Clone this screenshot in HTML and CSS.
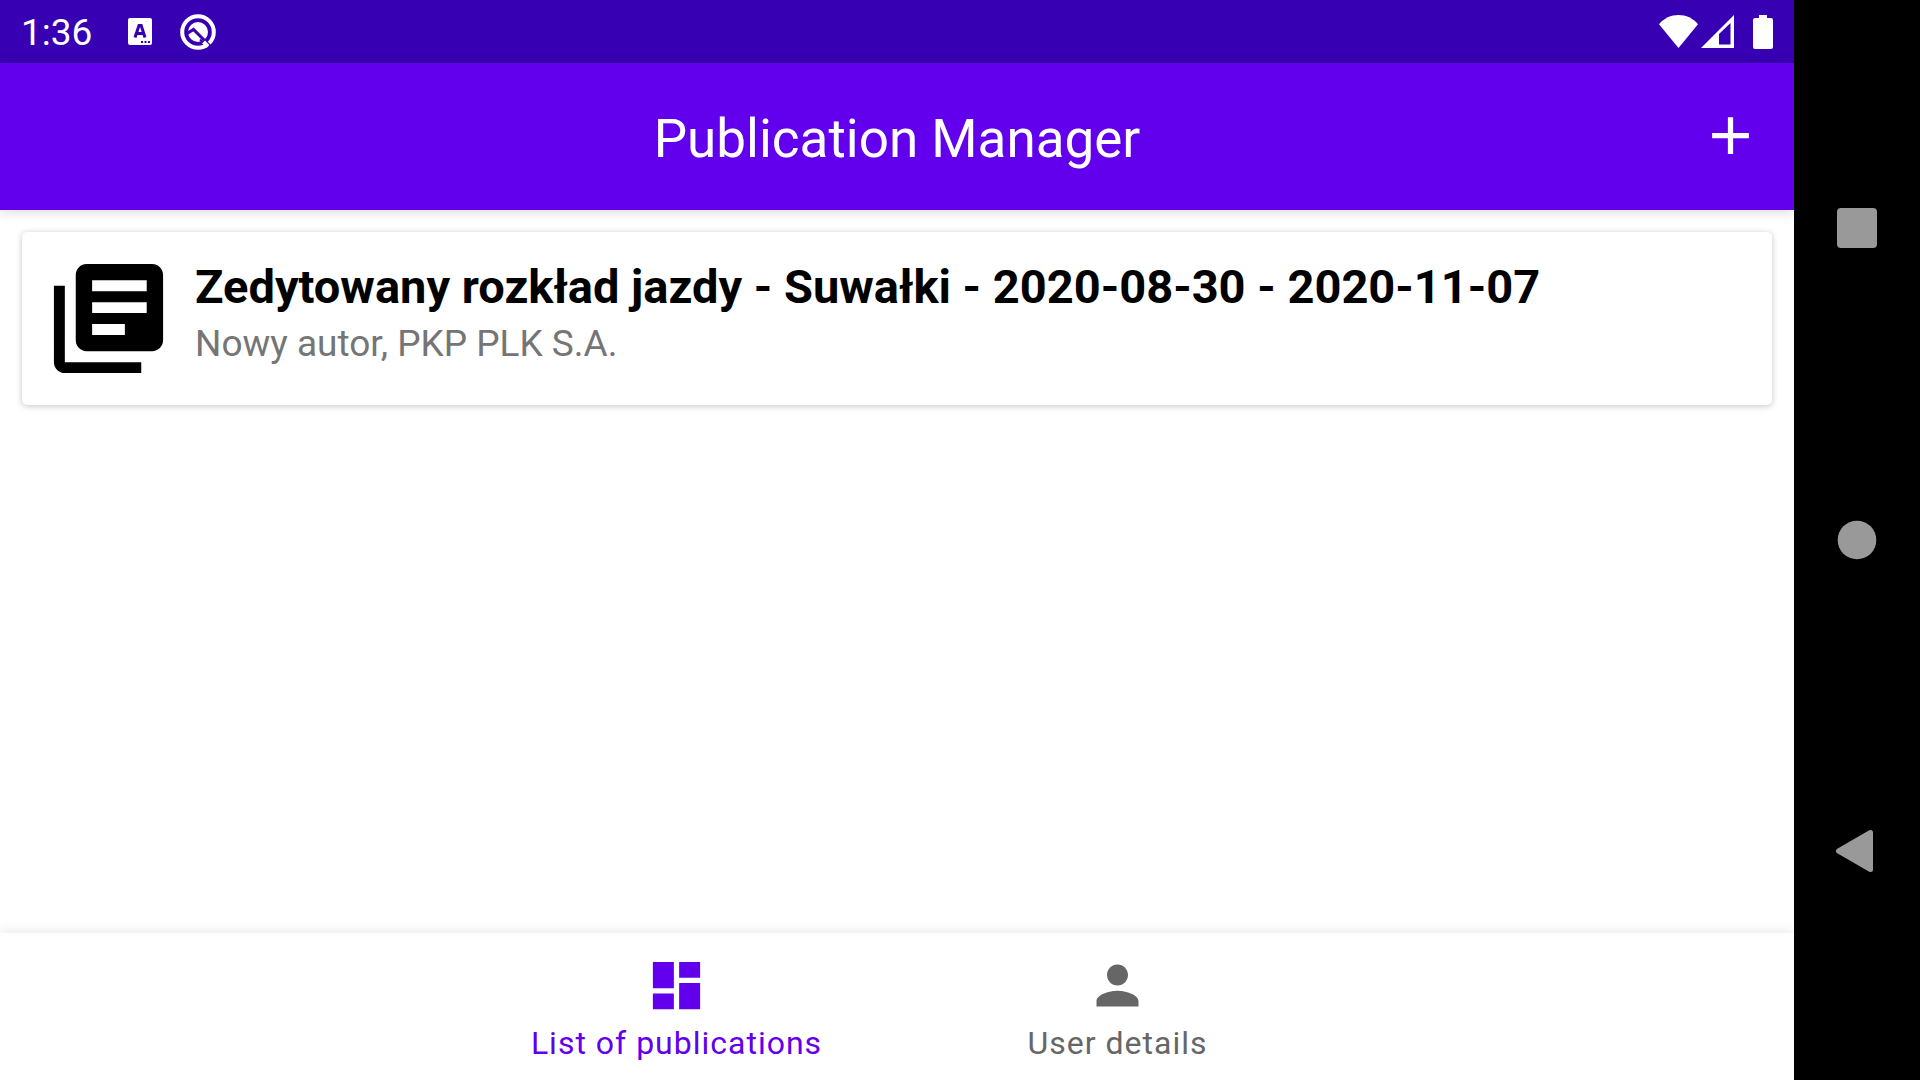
FILE: index.html
```html
<!DOCTYPE html>
<html lang="en">
<head>
<meta charset="utf-8">
<meta name="viewport" content="width=device-width, initial-scale=1">
<title>Publication Manager</title>
<link rel="stylesheet" href="styles.css">
</head>
<body>
<div class="device">
  <div class="app">
    <div class="status-bar">
      <div class="status-group notifications">
        <time class="clock">1:36</time>
        <svg width="24" height="27" viewBox="0 0 24 27" aria-hidden="true">
          <rect width="24" height="27" rx="2" fill="#fff"/>
          <path d="M7 19.500 11 7.500h2.200L17 19.500M8.500 15.500h7" fill="none" stroke="#3700b3" stroke-width="3"/>
          <path d="M13 23h2v2h-2zM16.500 23h2v2h-2zM20 23h2v2h-2z" fill="#3700b3"/>
        </svg>
        <svg width="36" height="36" viewBox="0 0 36 36" aria-hidden="true">
          <circle cx="18" cy="18" r="15.800" fill="none" stroke="#fff" stroke-width="4"/>
          <circle cx="18" cy="18" r="10" fill="#fff"/>
          <path d="M7 19.500 13.500 15.500 31 33" fill="none" stroke="#3700b3" stroke-width="3"/>
          <path d="M20 25.500 29.500 35" fill="none" stroke="#3700b3" stroke-width="2"/>
          <path d="M23.500 28 28 32.500" fill="none" stroke="#fff" stroke-width="4"/>
        </svg>
      </div>
      <div class="status-group">
        <svg width="39" height="33" viewBox="0 0 39 33" aria-hidden="true"><path d="M19.500 33 0 9.200C5 3.200 12 0 19.500 0S34 3.200 39 9.200z" fill="#fff"/></svg>
        <svg width="33" height="33" viewBox="0 0 33 33" aria-hidden="true"><path fill-rule="evenodd" d="M0 33 33 0v33zM18 29.500h11.500V8L18 19z" fill="#fff"/></svg>
        <svg class="battery" width="20" height="34" viewBox="0 0 20 34" aria-hidden="true"><path d="M6 0h8v3h4a2 2 0 0 1 2 2v27a2 2 0 0 1-2 2H2a2 2 0 0 1-2-2V5a2 2 0 0 1 2-2h4z" fill="#fff"/></svg>
      </div>
    </div>

    <header class="toolbar">
      <h1 class="toolbar-title">Publication Manager</h1>
      <button class="add-button" type="button" aria-label="Add publication">
        <svg class="icon" viewBox="0 0 24 24" aria-hidden="true"><path d="M19 13h-6v6h-2v-6H5v-2h6V5h2v6h6z"/></svg>
      </button>
    </header>

    <main class="content">
      <article class="card">
        <svg class="card-icon" viewBox="0 0 24 24" aria-hidden="true"><path d="M4 6H2v14c0 1.100.9 2 2 2h14v-2H4zM20 2H8c-1.100 0-2 .9-2 2v12c0 1.100.9 2 2 2h12c1.100 0 2-.9 2-2V4c0-1.100-.9-2-2-2zm-1 9H9V9h10zm-4 4H9v-2h6zm4-8H9V5h10z"/></svg>
        <div class="card-text">
          <h2 class="card-title">Zedytowany rozkład jazdy - Suwałki - 2020-08-30 - 2020-11-07</h2>
          <p class="card-author">Nowy autor, PKP PLK S.A.</p>
        </div>
      </article>
    </main>

    <nav class="bottom-nav">
      <a class="nav-item active" href="#publications" aria-current="page">
        <svg class="icon" viewBox="0 0 24 24" aria-hidden="true"><path d="M3 13h8V3H3zm0 8h8v-6H3zm10 0h8V11h-8zm0-18v6h8V3z"/></svg>
        <span>List of publications</span>
      </a>
      <a class="nav-item" href="#user">
        <svg class="icon" viewBox="0 0 24 24" aria-hidden="true"><path d="M12 12c2.210 0 4-1.790 4-4s-1.790-4-4-4-4 1.790-4 4 1.790 4 4 4zm0 2c-2.670 0-8 1.340-8 4v2h16v-2c0-2.660-5.330-4-8-4z"/></svg>
        <span>User details</span>
      </a>
    </nav>
  </div>

  <div class="system-nav">
    <button type="button" aria-label="Overview"><svg width="42" height="42" viewBox="0 0 42 42"><rect x="1" y="1" width="40" height="40" rx="4"/></svg></button>
    <button type="button" aria-label="Home"><svg width="42" height="42" viewBox="0 0 42 42"><circle cx="21" cy="21" r="19.300"/></svg></button>
    <button type="button" aria-label="Back"><svg width="42" height="42" viewBox="0 0 42 42"><path d="M2.500 20 34.500 1.500V38.500z" stroke="#999" stroke-width="5" stroke-linejoin="round"/></svg></button>
  </div>
</div>
</body>
</html>
```
FILE: styles.css
```css
* {
  box-sizing: border-box;
}

body {
  margin: 0;
  font-family: Roboto, "Noto Sans", sans-serif;
  background: #fff;
}

h1, h2, p {
  margin: 0;
}

svg {
  display: block;
  flex: none;
  overflow: visible;
}

button {
  padding: 0;
  border: 0;
  background: none;
  cursor: pointer;
}

.device {
  display: flex;
  min-height: 100vh;
}

.app {
  flex: 1;
  min-width: 0;
  display: flex;
  flex-direction: column;
}

.status-bar {
  display: flex;
  justify-content: space-between;
  align-items: center;
  height: 63px;
  padding: 0 21px;
  background: #3700b3;
  color: #fff;
}

.status-group {
  display: flex;
  align-items: center;
  gap: 3px;
}

.notifications {
  gap: 28px;
}

.clock {
  padding: 2px 8px 0 0;
  font-size: 37px;
  line-height: 43px;
}

.battery {
  margin-left: 16px;
}

.icon {
  width: 63px;
  height: 63px;
  fill: currentColor;
}

.toolbar {
  display: grid;
  grid-template-columns: 1fr auto 1fr;
  align-items: center;
  height: 147px;
  padding: 0 32px 2px;
  background: #6200ee;
  color: #fff;
  box-shadow: 0 2px 12px rgba(0, 0, 0, 0.15);
}

.toolbar-title {
  grid-column: 2;
  padding-top: 6px;
  font-size: 53px;
  font-weight: 400;
  line-height: 62px;
}

.add-button {
  justify-self: end;
  color: #fff;
}

.content {
  flex: 1;
  padding: 22px;
}

.card {
  display: flex;
  gap: 21px;
  padding: 21px;
  border-radius: 5px;
  background: #fff;
  box-shadow: 0 1px 6px rgba(0, 0, 0, 0.24);
}

.card-icon {
  width: 131px;
  height: 131px;
}

.card-text {
  display: flex;
  flex-direction: column;
  gap: 8px;
  padding-top: 6px;
}

.card-title {
  font-size: 47px;
  font-weight: 700;
  line-height: 55px;
  color: #000;
}

.card-author {
  font-size: 37px;
  line-height: 43px;
  color: #757575;
}

.bottom-nav {
  display: flex;
  justify-content: center;
  height: 147px;
  padding-top: 21px;
  background: #fff;
  box-shadow: 0 0 12px rgba(0, 0, 0, 0.12);
}

.nav-item {
  display: flex;
  flex-direction: column;
  align-items: center;
  gap: 7px;
  width: 441px;
  font-size: 32px;
  line-height: 38px;
  letter-spacing: 1px;
  color: #666;
  text-decoration: none;
}

.nav-item.active {
  color: #6200ee;
}

.system-nav {
  display: flex;
  flex-direction: column;
  width: 126px;
  padding: 72px 0;
  background: #000;
}

.system-nav button {
  flex: 1;
  display: flex;
  align-items: center;
  justify-content: center;
}

.system-nav svg {
  fill: #999;
}
```
